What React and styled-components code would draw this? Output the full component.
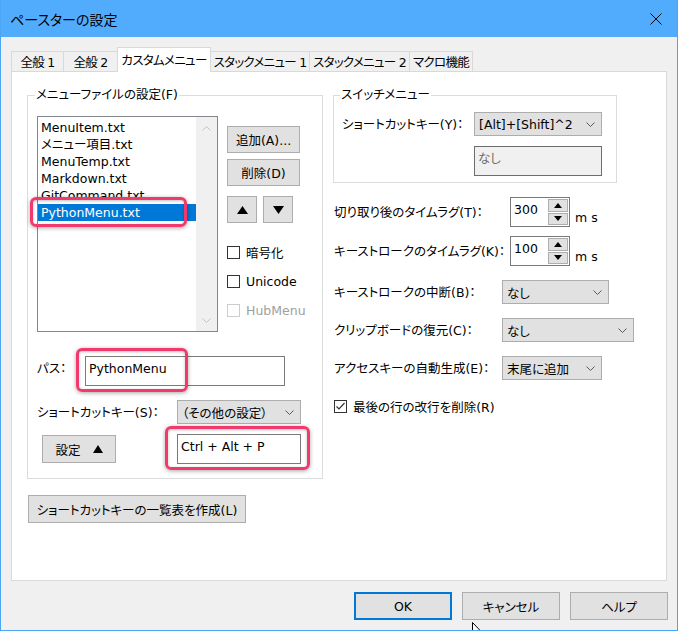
import React from 'react'
import styled, { createGlobalStyle } from 'styled-components'

const GlobalStyle = createGlobalStyle`
  html, body { margin: 0; padding: 0; background: #f0f0f0; }
  body {
    font-family: "DejaVu Sans", "Noto Sans CJK JP", sans-serif;
    font-size: 12.5px;
    font-feature-settings: "palt" 1;
    color: #000;
  }
  * { box-sizing: border-box; }
`

const Window = styled.div`
  position: relative;
  width: 678px;
  height: 631px;
  border: 1px solid #4ba5f5;
  border-top: 0;
  background: #f0f0f0;
  display: flex;
  flex-direction: column;
  overflow: hidden;
`

const TitleBar = styled.div`
  height: 37px;
  flex: none;
  margin: 0 -1px;
  background: #52acfe;
  display: flex;
  align-items: center;
  justify-content: space-between;
  padding: 0 16px 0 10px;
  font-size: 14px;
`

const Body = styled.div`
  flex: 1;
  display: flex;
  flex-direction: column;
  padding: 10px 10px 0;
`

const TabStrip = styled.div`
  display: flex;
  align-items: flex-end;
  height: 24px;
  flex: none;
`

const Tab = styled.div`
  position: relative;
  z-index: ${p => (p.$active ? 2 : 1)};
  width: ${p => p.$w}px;
  height: ${p => (p.$active ? 25 : 20)}px;
  margin-right: -1px;
  margin-bottom: ${p => (p.$active ? -1 : 0)}px;
  border: 1px solid #d9d9d9;
  border-bottom: 0;
  background: ${p => (p.$active ? '#fff' : '#f0f0f0')};
  display: flex;
  align-items: center;
  justify-content: center;
  padding-bottom: ${p => (p.$active ? 2 : 0)}px;
  letter-spacing: -0.7px;
  white-space: nowrap;
`

const Panel = styled.div`
  position: relative;
  z-index: 1;
  flex: 1;
  background: #fff;
  border: 1px solid #d9d9d9;
  padding: 15px 15px;
  display: flex;
  gap: 10px;
  align-items: flex-start;
`

const Column = styled.div`
  display: flex;
  flex-direction: column;
  align-items: flex-start;
`

const Group = styled.fieldset`
  margin: 0;
  min-width: 0;
  width: ${p => p.$w}px;
  border: 1px solid #dcdcdc;
  padding: ${p => p.$pad};
`

const Legend = styled.legend`
  padding: 0 1px;
  margin-left: -2px;
  line-height: 16px;
`

const ListRow = styled.div`
  display: flex;
  gap: 9px;
  align-items: flex-start;
`

const ListBox = styled.div`
  position: relative;
  width: 181px;
  height: 216px;
  border: 1px solid #828790;
  background: #fff;
  display: flex;
`

const Items = styled.div`
  flex: 1;
  padding-top: 2px;
  display: flex;
  flex-direction: column;
  overflow: hidden;
`

const Item = styled.div`
  height: 17px;
  line-height: 17px;
  padding-left: 3px;
  white-space: nowrap;
  background: ${p => (p.$selected ? '#0078d7' : 'transparent')};
  color: ${p => (p.$selected ? '#fff' : '#000')};
`

const ScrollBar = styled.div`
  width: 21px;
  background: #f0f0f0;
  display: flex;
  flex-direction: column;
  justify-content: space-between;
  align-items: center;
  padding: 9px 0 8px;
`

const ButtonCol = styled.div`
  display: flex;
  flex-direction: column;
  align-items: flex-start;
  padding-top: 10px;
`

const PushButton = styled.button`
  width: ${p => p.$w}px;
  height: ${p => p.$h || 28}px;
  margin: ${p => p.$m || '0'};
  background: #e1e1e1;
  border: ${p => (p.$default ? '2px solid #0078d7' : '1px solid #adadad')};
  font: inherit;
  color: #000;
  padding: 0;
  display: flex;
  align-items: center;
  justify-content: center;
  gap: ${p => p.$gap || 0}px;
  flex: none;
  white-space: nowrap;
`

const ArrowRow = styled.div`
  display: flex;
  gap: 6px;
  margin-top: 10px;
`

const CheckList = styled.div`
  display: flex;
  flex-direction: column;
  gap: 16px;
  margin-top: 23px;
`

const CheckRow = styled.div`
  display: flex;
  align-items: center;
  height: 13px;
  gap: 6px;
  color: ${p => (p.$disabled ? '#a0a0a0' : '#000')};
  white-space: nowrap;
`

const Box = styled.span`
  width: 13px;
  height: 13px;
  flex: none;
  border: 1px solid ${p => (p.$disabled ? '#cccccc' : '#333333')};
  background: #fff;
  display: flex;
`

const FormRow = styled.div`
  display: flex;
  align-items: ${p => p.$align || 'center'};
  margin-top: ${p => p.$mt || 0}px;
  padding-left: ${p => p.$pl || 0}px;
`

const FieldLabel = styled.span`
  width: ${p => p.$w}px;
  flex: none;
  line-height: 17px;
  padding-top: ${p => p.$pt || 0}px;
  white-space: nowrap;
`

const TextBox = styled.div`
  position: relative;
  width: ${p => p.$w}px;
  height: 30px;
  flex: none;
  margin-left: ${p => p.$ml || 0}px;
  margin-top: ${p => p.$mt || 0}px;
  border: 1px solid ${p => (p.$disabled ? '#6d6d6d' : '#7a7a7a')};
  background: ${p => (p.$disabled ? '#f0f0f0' : '#fff')};
  color: ${p => (p.$disabled ? '#6d6d6d' : '#000')};
  padding: 3px 3px;
  line-height: 17px;
  white-space: nowrap;
`

const Combo = styled.div`
  width: ${p => p.$w}px;
  height: 24px;
  flex: none;
  border: 1px solid #adadad;
  background: #e1e1e1;
  display: flex;
  align-items: center;
  justify-content: space-between;
  padding: 0 6px 0 4px;
  white-space: nowrap;
`

const Spin = styled.div`
  width: 60px;
  height: 30px;
  flex: none;
  border: 1px solid #7a7a7a;
  background: #fff;
  display: flex;
`

const SpinText = styled.div`
  flex: 1;
  padding: 3px 3px;
  line-height: 17px;
`

const SpinButtons = styled.div`
  width: 21px;
  display: flex;
  flex-direction: column;
  gap: 1px;
  padding: 1px 1px 1px 0;
`

const SpinBtn = styled.div`
  flex: 1;
  background: #e1e1e1;
  border: 1px solid #adadad;
  display: flex;
  align-items: center;
  justify-content: center;
`

const Unit = styled.span`
  align-self: flex-end;
  line-height: 17px;
  margin: 0 0 1px 5px;
`

const Highlight = styled.span`
  position: absolute;
  left: ${p => p.$x}px;
  top: ${p => p.$y}px;
  width: ${p => p.$w}px;
  height: ${p => p.$h}px;
  border: 3px solid #f2396d;
  border-radius: 6px;
  box-shadow: 0 1px 4px rgba(0, 0, 0, 0.35), inset 0 1px 3px rgba(0, 0, 0, 0.25);
  pointer-events: none;
  z-index: 3;
`

const Footer = styled.div`
  display: flex;
  justify-content: flex-end;
  gap: 10px;
  padding: 11px 0 10px;
  margin-right: -1px;
  flex: none;
`

const Cursor = styled.svg`
  position: absolute;
  left: 471px;
  top: 622px;
`

const Chevron = ({ up, color = '#5a5a5a' }) => (
  <svg width="9" height="5" viewBox="0 0 9 5">
    <polyline
      points={up ? '0.5,4.5 4.5,0.5 8.5,4.5' : '0.5,0.5 4.5,4.5 8.5,0.5'}
      fill="none"
      stroke={color}
      strokeWidth="1"
    />
  </svg>
)

const Triangle = ({ down, w = 11, h = 8 }) => (
  <svg width={w} height={h} viewBox={`0 0 ${w} ${h}`}>
    <polygon points={down ? `0,0 ${w},0 ${w / 2},${h}` : `0,${h} ${w},${h} ${w / 2},0`} fill="#000" />
  </svg>
)

const tabs = [
  { label: '全般 1', w: 53 },
  { label: '全般 2', w: 55 },
  { label: 'カスタムメニュー', w: 94, active: true },
  { label: 'スタックメニュー 1', w: 100 },
  { label: 'スタックメニュー 2', w: 101 },
  { label: 'マクロ機能', w: 64 }
]

const files = ['MenuItem.txt', 'メニュー項目.txt', 'MenuTemp.txt', 'Markdown.txt', 'GitCommand.txt', 'PythonMenu.txt']

const App = () => {
  return (
    <>
      <GlobalStyle />
      <Window>
        <TitleBar>
          <span>ペースターの設定</span>
          <svg width="12" height="12" viewBox="0 0 12 12">
            <path d="M0.5 0.5 L11.5 11.5 M11.5 0.5 L0.5 11.5" stroke="#000" strokeWidth="1" />
          </svg>
        </TitleBar>
        <Body>
          <TabStrip>
            {tabs.map(t => (
              <Tab key={t.label} $w={t.w} $active={t.active}>{t.label}</Tab>
            ))}
          </TabStrip>
          <Panel>
            <Column>
              <Group $w={296} $pad="13px 10px 14px 9px">
                <Legend>メニューファイルの設定(F)</Legend>
                <ListRow>
                  <ListBox>
                    <Items>
                      {files.map(f => (
                        <Item key={f} $selected={f === 'PythonMenu.txt'}>{f}</Item>
                      ))}
                    </Items>
                    <ScrollBar>
                      <Chevron up color="#c2c2c2" />
                      <Chevron color="#c2c2c2" />
                    </ScrollBar>
                    <Highlight $x={-8} $y={80} $w={157} $h={30} />
                  </ListBox>
                  <ButtonCol>
                    <PushButton $w={73} $h={27}>追加(A)...</PushButton>
                    <PushButton $w={73} $h={27} $m="6px 0 0">削除(D)</PushButton>
                    <ArrowRow>
                      <PushButton $w={30} $h={27}><Triangle /></PushButton>
                      <PushButton $w={30} $h={27}><Triangle down /></PushButton>
                    </ArrowRow>
                    <CheckList>
                      <CheckRow><Box />暗号化</CheckRow>
                      <CheckRow><Box />Unicode</CheckRow>
                      <CheckRow $disabled><Box $disabled />HubMenu</CheckRow>
                    </CheckList>
                  </ButtonCol>
                </ListRow>
                <FormRow $mt={24} $align="flex-start">
                  <FieldLabel $w={48} $pt={4}>パス：</FieldLabel>
                  <TextBox $w={200}>
                    PythonMenu
                    <Highlight $x={-10} $y={-9} $w={112} $h={44} />
                  </TextBox>
                </FormRow>
                <FormRow $mt={14}>
                  <FieldLabel $w={140}>ショートカットキー(S)：</FieldLabel>
                  <Combo $w={124}>
                    <span>（その他の設定）</span>
                    <Chevron />
                  </Combo>
                </FormRow>
                <FormRow $mt={10}>
                  <PushButton $w={74} $h={28} $m="0 0 0 5px" $gap={12}>
                    設定 <Triangle w={10} h={8} />
                  </PushButton>
                  <TextBox $w={124} $ml={61}>
                    Ctrl + Alt + P
                    <Highlight $x={-13} $y={-9} $w={145} $h={44} />
                  </TextBox>
                </FormRow>
              </Group>
              <PushButton $w={218} $h={28} $m="16px 0 0 1px">ショートカットキーの一覧表を作成(L)</PushButton>
            </Column>
            <Column>
              <Group $w={284} $pad="9px 8px 6px 8px">
                <Legend>スイッチメニュー</Legend>
                <FormRow>
                  <FieldLabel $w={132}>ショートカットキー(Y)：</FieldLabel>
                  <Combo $w={128}>
                    <span>[Alt]+[Shift]^2</span>
                    <Chevron />
                  </Combo>
                </FormRow>
                <TextBox $w={128} $ml={132} $mt={10} $disabled>なし</TextBox>
              </Group>
              <FormRow $mt={14} $pl={1}>
                <FieldLabel $w={176}>切り取り後のタイムラグ(T)：</FieldLabel>
                <Spin>
                  <SpinText>300</SpinText>
                  <SpinButtons>
                    <SpinBtn><Triangle w={8} h={5} /></SpinBtn>
                    <SpinBtn><Triangle down w={8} h={5} /></SpinBtn>
                  </SpinButtons>
                </Spin>
                <Unit>m s</Unit>
              </FormRow>
              <FormRow $mt={9} $pl={1}>
                <FieldLabel $w={176}>キーストロークのタイムラグ(K)：</FieldLabel>
                <Spin>
                  <SpinText>100</SpinText>
                  <SpinButtons>
                    <SpinBtn><Triangle w={8} h={5} /></SpinBtn>
                    <SpinBtn><Triangle down w={8} h={5} /></SpinBtn>
                  </SpinButtons>
                </Spin>
                <Unit>m s</Unit>
              </FormRow>
              <FormRow $mt={14} $pl={1}>
                <FieldLabel $w={168}>キーストロークの中断(B)：</FieldLabel>
                <Combo $w={107}>
                  <span>なし</span>
                  <Chevron />
                </Combo>
              </FormRow>
              <FormRow $mt={14} $pl={1}>
                <FieldLabel $w={168}>クリップボードの復元(C)：</FieldLabel>
                <Combo $w={132}>
                  <span>なし</span>
                  <Chevron />
                </Combo>
              </FormRow>
              <FormRow $mt={14} $pl={1}>
                <FieldLabel $w={168}>アクセスキーの自動生成(E)：</FieldLabel>
                <Combo $w={100}>
                  <span>末尾に追加</span>
                  <Chevron />
                </Combo>
              </FormRow>
              <FormRow $mt={20} $pl={1}>
                <CheckRow>
                  <Box>
                    <svg width="11" height="11" viewBox="0 0 11 11">
                      <polyline points="1.5,5.5 4,8 9.5,2" fill="none" stroke="#333" strokeWidth="1.2" />
                    </svg>
                  </Box>
                  最後の行の改行を削除(R)
                </CheckRow>
              </FormRow>
            </Column>
          </Panel>
          <Footer>
            <PushButton $w={98} $default>OK</PushButton>
            <PushButton $w={98}>キャンセル</PushButton>
            <PushButton $w={98}>ヘルプ</PushButton>
          </Footer>
        </Body>
        <Cursor width="12" height="19" viewBox="0 0 12 19">
          <path d="M0.5 0.5 L0.5 15.5 L4 12 L6.5 18 L8.5 17 L6 11.5 L11 11.5 Z" fill="#fff" stroke="#000" strokeWidth="1" />
        </Cursor>
      </Window>
    </>
  )
}

export default App
